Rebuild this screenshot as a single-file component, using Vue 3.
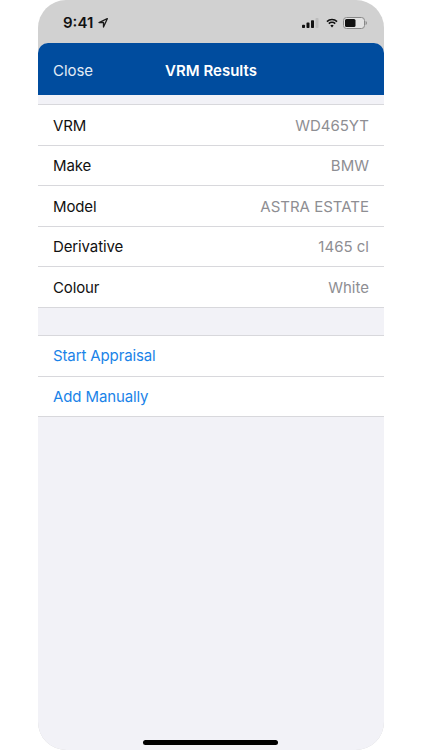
<script setup>
const details = [
  { label: 'VRM', value: 'WD465YT' },
  { label: 'Make', value: 'BMW' },
  { label: 'Model', value: 'ASTRA ESTATE' },
  { label: 'Derivative', value: '1465 cl' },
  { label: 'Colour', value: 'White' },
]
const actions = ['Start Appraisal', 'Add Manually']
</script>

<template>
  <div class="page">
    <div class="phone">
      <div class="status">
        <div class="time">
          <span>9:41</span>
          <svg viewBox="0 0 10 10" width="10" height="10"><path d="M9.3.7 1 4.500h4.500V9z" fill="none" stroke="#1a1a1a" stroke-width="1.300" stroke-linejoin="round"/></svg>
        </div>
        <div class="icons">
          <svg class="signal" viewBox="0 0 17 10" width="17" height="10">
            <rect x="0" y="6.800" width="3" height="3.200" rx=".8" fill="#111"/>
            <rect x="4.500" y="4.600" width="3" height="5.400" rx=".8" fill="#111"/>
            <rect x="9" y="2.300" width="3" height="7.700" rx=".8" fill="#111"/>
            <rect x="13.500" y="0" width="3" height="10" rx=".8" fill="#bdbdbd"/>
          </svg>
          <svg viewBox="0 0 13 10" width="12" height="10">
            <path d="M1 3.500a8 8 0 0 1 11 0M3 5.700a5.100 5.100 0 0 1 7 0" fill="none" stroke="#111" stroke-width="1.600"/>
            <path d="M4.700 7.700a2.600 2.600 0 0 1 3.600 0L6.500 9.800z" fill="#111"/>
          </svg>
          <svg viewBox="0 0 24 12" width="24" height="12">
            <rect x=".5" y=".5" width="21" height="11" rx="3" fill="#e2e2e2" stroke="#888"/>
            <rect x="2" y="2" width="10.500" height="8" rx="1.500" fill="#111"/>
            <path d="M22.600 4v4c.8-.3 1.300-1.100 1.300-2s-.5-1.700-1.300-2z" fill="#888"/>
          </svg>
        </div>
      </div>
      <div class="sheet">
        <header class="nav">
          <span class="close">Close</span>
          <span class="title">VRM Results</span>
        </header>
        <section class="group first">
          <div v-for="item in details" :key="item.label" class="row">
            <span class="label">{{ item.label }}</span>
            <span class="value">{{ item.value }}</span>
          </div>
        </section>
        <section class="group second">
          <div v-for="action in actions" :key="action" class="row">
            <span class="action">{{ action }}</span>
          </div>
        </section>
      </div>
      <div class="home"></div>
    </div>
  </div>
</template>

<style>
html, body { margin: 0; background: #fff; }
</style>

<style scoped>
.page {
  width: 422px;
  height: 750px;
  padding-left: 38px;
  box-sizing: border-box;
  background: #fff;
  font-family: Inter, "Liberation Sans", sans-serif;
  overflow: hidden;
}
.phone {
  position: relative;
  width: 346px;
  height: 750px;
  display: flex;
  flex-direction: column;
  background: #d1d1d1;
  border-radius: 28px;
  overflow: hidden;
}
.status {
  height: 43px;
  flex: none;
  display: flex;
  align-items: center;
  justify-content: space-between;
  padding: 2px 17px 0 25px;
  box-sizing: border-box;
}
.time {
  display: flex;
  align-items: center;
  gap: 5px;
  font-size: 15px;
  font-weight: 600;
  color: #111;
}
.icons {
  display: flex;
  align-items: center;
  gap: 5px;
}
.signal { margin-right: 2px; }
.sheet {
  flex: 1;
  display: flex;
  flex-direction: column;
  background: #f2f2f7;
  border-radius: 10px 10px 0 0;
  overflow: hidden;
}
.nav {
  position: relative;
  height: 52px;
  flex: none;
  display: flex;
  align-items: center;
  justify-content: center;
  padding-top: 3px;
  box-sizing: border-box;
  background: #004c9e;
  color: #fff;
  font-size: 15px;
}
.close {
  position: absolute;
  left: 15px;
  letter-spacing: -0.05px;
  color: #e3ebf5;
}
.title {
  font-weight: 600;
  font-size: 15px;
}
.group {
  background: #fff;
  border-top: 1px solid #d8d8dc;
}
.first { margin-top: 9px; }
.second { margin-top: 27.5px; }
.row {
  height: 40.5px;
  box-sizing: border-box;
  display: flex;
  align-items: center;
  justify-content: space-between;
  padding: 0 15px;
  font-size: 15px;
  border-bottom: 1px solid #d8d8dc;
}
.first .row { padding-top: 1px; }
.label, .action { letter-spacing: -0.12px; }
.label { color: #111; }
.value { color: #8e8e93; }
.action { color: #1a83e8; }
.home {
  position: absolute;
  left: 105px;
  bottom: 5px;
  width: 135px;
  height: 5px;
  border-radius: 3px;
  background: #000;
}
</style>
